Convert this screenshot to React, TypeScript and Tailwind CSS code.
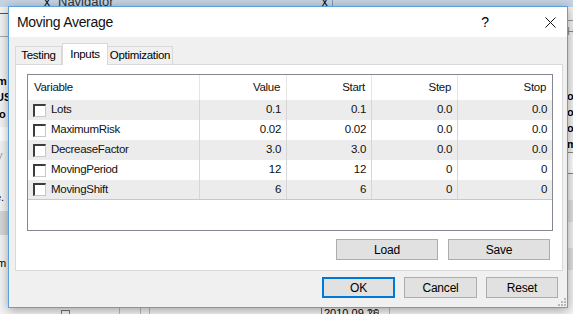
import React from "react";

const rows = [
  { name: "Lots", value: "0.1", start: "0.1", step: "0.0", stop: "0.0" },
  { name: "MaximumRisk", value: "0.02", start: "0.02", step: "0.0", stop: "0.0" },
  { name: "DecreaseFactor", value: "3.0", start: "3.0", step: "0.0", stop: "0.0" },
  { name: "MovingPeriod", value: "12", start: "12", step: "0", stop: "0" },
  { name: "MovingShift", value: "6", start: "6", step: "0", stop: "0" },
];

const font = { fontFamily: '"Liberation Sans", Arial, sans-serif' };

function Checkbox() {
  return (
    <span className="inline-block h-[13px] w-[13px] shrink-0 border-t-2 border-l-2 border-t-[#3c3c3c] border-l-[#3c3c3c] border-r border-b border-r-[#c8c8c8] border-b-[#c8c8c8] bg-white" />
  );
}

function Button({ label, primary, w }: { label: string; primary?: boolean; w: string }) {
  return (
    <button
      className={
        w +
        " flex h-[21px] items-center justify-center bg-[#e1e1e1] text-[12px] tracking-[-0.2px] text-black " +
        (primary ? "border-2 border-[#0078d7]" : "border border-[#adadad]")
      }
    >
      {label}
    </button>
  );
}

// Desktop bits peeking out around the dialog
function Backdrop() {
  return (
    <div className="absolute inset-0 flex flex-col overflow-hidden bg-[#f3f3f3] text-[11px] text-black" style={font}>
      <div className="flex h-[7px] shrink-0 items-end overflow-hidden bg-[#c6d3e3] leading-[10px]">
        <span className="ml-[44px] text-[12px]">x</span>
        <span className="ml-[8px] text-[13px] text-[#333]">Navigator</span>
        <span className="ml-[208px] text-[12px]">x</span>
        <span className="ml-[4px] h-full w-px bg-[#8a99ac]" />
      </div>
      <div className="flex flex-1">
        <div className="flex w-[8px] flex-col overflow-hidden">
          <div className="mt-[6px] h-px bg-[#555]" />
          <div className="mt-[22px] h-px bg-[#aaa]" />
          <div className="mt-[36px] h-[16px] font-bold leading-[16px] -ml-[3px]">m</div>
          <div className="h-[17px] font-bold leading-[17px] -ml-[4px]">US</div>
          <div className="h-[17px] font-bold leading-[17px] -ml-[4px]">lo</div>
          <div className="mt-[4px] h-[14px] bg-white" />
          <div className="mt-[6px] h-[16px] leading-[16px] text-[#999] -ml-[3px]">y</div>
          <div className="mt-[26px] h-[16px] leading-[16px] -ml-[5px]">e.</div>
          <div className="mt-[6px] h-[24px] bg-[#d6d6d6]" />
          <div className="mt-[20px] h-[16px] leading-[16px] -ml-[3px]">m</div>
        </div>
        <div className="flex-1" />
        <div className="flex w-[6px] flex-col overflow-hidden">
          <div className="mt-[13px] h-[22px] border-t border-[#999] leading-[20px] text-[#888]">H</div>
          <div className="mt-[46px] h-[16px] font-bold leading-[16px]">or</div>
          <div className="h-[16px] font-bold leading-[16px]">or</div>
          <div className="h-[16px] font-bold leading-[16px]">or</div>
          <div className="h-[16px] font-bold leading-[16px]">m</div>
          <div className="h-[22px] border-y border-[#888] bg-white" />
          <div className="mt-[26px] h-[22px] bg-[#e0e0e0]" />
          <div className="mt-[26px] h-[22px] bg-[#e0e0e0]" />
        </div>
      </div>
      <div className="flex h-[7px] shrink-0 items-start overflow-hidden leading-[12px]">
        <span className="ml-[61px] mt-[3px] h-[8px] w-[9px] border border-[#777]" />
        <span className="ml-[49px] h-full w-[22px] border-x border-[#bbb]" />
        <span className="ml-[8px] h-full w-px bg-[#bbb]" />
        <span className="ml-[171px] h-full w-px bg-[#777]" />
        <span className="ml-[2px]">2010.09.26</span>
        <span className="ml-[-10px] mt-[3px] h-[8px] w-[10px] border border-[#777]" />
        <span className="ml-[10px] h-full w-px bg-[#bbb]" />
      </div>
    </div>
  );
}

export default function App() {
  return (
    <div className="relative h-[314px] w-[573px] overflow-hidden" style={font}>
      <Backdrop />

      <div className="absolute left-[8px] top-[6px] flex h-[302px] w-[560px] flex-col border border-[#5aa0dc] bg-[#f0f0f0] shadow-[0_2px_10px_rgba(0,0,0,0.35)]">
        {/* Title bar */}
        <div className="flex h-[30px] shrink-0 items-center bg-white pl-[8px] pr-[11px]">
          <span className="text-[14px] tracking-[-0.3px] text-[#111]">Moving Average</span>
          <span className="ml-auto mr-[56px] text-[14px] text-black">?</span>
          <svg width="11" height="11" viewBox="0 0 11 11">
            <path d="M0.5 0.5 L10.5 10.5 M10.5 0.5 L0.5 10.5" stroke="#111" strokeWidth="1" />
          </svg>
        </div>

        {/* Client area */}
        <div className="flex flex-1 flex-col pl-[6px] pr-[4px] pt-[6px]">
          {/* Tabs */}
          <div className="flex h-[21px] items-end text-[11.5px] tracking-[-0.3px] text-black">
            <div className="flex h-[18px] w-[47px] items-center justify-center border border-b-0 border-[#d9d9d9] bg-[#f0f0f0]">
              Testing
            </div>
            <div className="relative z-10 -mb-px flex h-[22px] w-[46px] items-center justify-center border border-b-0 border-[#d9d9d9] bg-white">
              Inputs
            </div>
            <div className="flex h-[18px] w-[65px] items-center justify-center border border-b-0 border-l-0 border-[#d9d9d9] bg-[#f0f0f0]">
              Optimization
            </div>
          </div>

          {/* Tab panel */}
          <div className="flex h-[207px] flex-col border border-[#d9d9d9] bg-white pl-[11px] pr-[8px] pt-[9px]">
            <div className="h-[157px] w-[526px] border border-[#828790] bg-white text-[11.5px] tracking-[-0.3px] text-[#111]">
              <div className="flex h-[25px] items-center">
                <div className="flex h-full w-[172px] items-center border-r border-[#e5e5e5] pl-[6px]">Variable</div>
                <div className="flex h-full w-[87px] items-center justify-end border-r border-[#e5e5e5] pr-[6px]">Value</div>
                <div className="flex h-full w-[85px] items-center justify-end border-r border-[#e5e5e5] pr-[6px]">Start</div>
                <div className="flex h-full w-[86px] items-center justify-end border-r border-[#e5e5e5] pr-[6px]">Step</div>
                <div className="flex h-full flex-1 items-center justify-end pr-[6px]">Stop</div>
              </div>
              {rows.map((r, i) => (
                <div
                  key={r.name}
                  className={
                    "flex h-[20px] items-center " +
                    (i % 2 === 0 ? "bg-[#ececec] " : "bg-white ") +
                    (i === rows.length - 1 ? "border-b border-[#c8c8c8]" : "")
                  }
                >
                  <div className="flex h-full w-[172px] items-center gap-[5px] border-r border-[#d6d6d6] pl-[5px]">
                    <Checkbox />
                    <span>{r.name}</span>
                  </div>
                  <div className="flex h-full w-[87px] items-center justify-end border-r border-[#d6d6d6] pr-[5px]">{r.value}</div>
                  <div className="flex h-full w-[85px] items-center justify-end border-r border-[#d6d6d6] pr-[5px]">{r.start}</div>
                  <div className="flex h-full w-[86px] items-center justify-end border-r border-[#d6d6d6] pr-[5px]">{r.step}</div>
                  <div className="flex h-full flex-1 items-center justify-end pr-[5px]">{r.stop}</div>
                </div>
              ))}
            </div>
            <div className="mt-[8px] flex justify-end gap-[10px] pr-[4px]">
              <Button label="Load" w="w-[102px]" />
              <Button label="Save" w="w-[102px]" />
            </div>
          </div>

          {/* Dialog buttons */}
          <div className="mt-[6px] flex justify-end gap-[9px] pr-[5px]">
            <Button label="OK" primary w="w-[73px]" />
            <Button label="Cancel" w="w-[73px]" />
            <Button label="Reset" w="w-[72px]" />
          </div>
        </div>

        {/* Resize grip */}
        <svg width="8" height="8" viewBox="0 0 8 8" className="absolute bottom-[1px] right-[1px]">
          {[[6, 0], [6, 3], [3, 3], [6, 6], [3, 6], [0, 6]].map(([x, y]) => (
            <rect key={`${x}-${y}`} x={x} y={y} width="2" height="2" fill="#b8b8b8" />
          ))}
        </svg>
      </div>
    </div>
  );
}
